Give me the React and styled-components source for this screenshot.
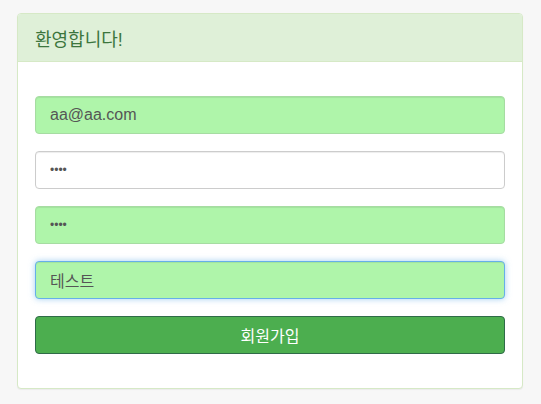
import styled, { createGlobalStyle } from "styled-components";

const GlobalStyle = createGlobalStyle`
  html, body {
    margin: 0;
    padding: 0;
    background: #f7f7f7;
  }
  body {
    font-family: "Liberation Sans", "Noto Sans CJK KR", Arial, sans-serif;
  }
`;

const Page = styled.div`
  padding: 13px 18px 14px 17px;
`;

const Panel = styled.section`
  background: #fff;
  border: 1px solid #d6e9c6;
  border-radius: 4px;
  box-shadow: 0 1px 1px rgba(0, 0, 0, 0.05);
`;

const Heading = styled.div`
  height: 48px;
  box-sizing: border-box;
  padding: 0 17px;
  display: flex;
  align-items: center;
  background: #dff0d8;
  border-bottom: 1px solid #d6e9c6;
  border-radius: 3px 3px 0 0;
  color: #3c763d;
  font-size: 18px;
`;

const Body = styled.form`
  padding: 34px 17px 34px 17px;
  display: flex;
  flex-direction: column;
  gap: 17px;
`;

const Input = styled.input`
  box-sizing: border-box;
  width: 100%;
  height: 38px;
  margin: 0;
  padding: 0 14px;
  font-family: inherit;
  font-size: ${(p) => (p.type === "password" ? "12px" : "16px")};
  color: #555;
  border-radius: 4px;
  outline: none;
  border: 1px solid ${(p) => (p.$focus ? "#66afe9" : p.$filled ? "#a6dca2" : "#ccc")};
  background: ${(p) => (p.$filled ? "#aff5aa" : "#fff")};
  box-shadow: ${(p) =>
    p.$focus
      ? "inset 0 1px 1px rgba(0,0,0,.075), 0 0 6px rgba(102,175,233,.6)"
      : "inset 0 1px 1px rgba(0,0,0,.075)"};
`;

const Submit = styled.button`
  box-sizing: border-box;
  width: 100%;
  height: 38px;
  margin: 0;
  border: 1px solid #2f6b48;
  border-radius: 4px;
  background: #4cae4f;
  color: #fff;
  font-family: inherit;
  font-size: 16px;
  cursor: pointer;
`;

export default function App() {
  return (
    <>
      <GlobalStyle />
      <Page>
        <Panel>
          <Heading>환영합니다!</Heading>
          <Body onSubmit={(e) => e.preventDefault()}>
            <Input $filled type="email" defaultValue="aa@aa.com" />
            <Input type="password" defaultValue="aaaa" />
            <Input $filled type="password" defaultValue="aaaa" />
            <Input $filled $focus type="text" defaultValue="테스트" />
            <Submit type="submit">회원가입</Submit>
          </Body>
        </Panel>
      </Page>
    </>
  );
}
